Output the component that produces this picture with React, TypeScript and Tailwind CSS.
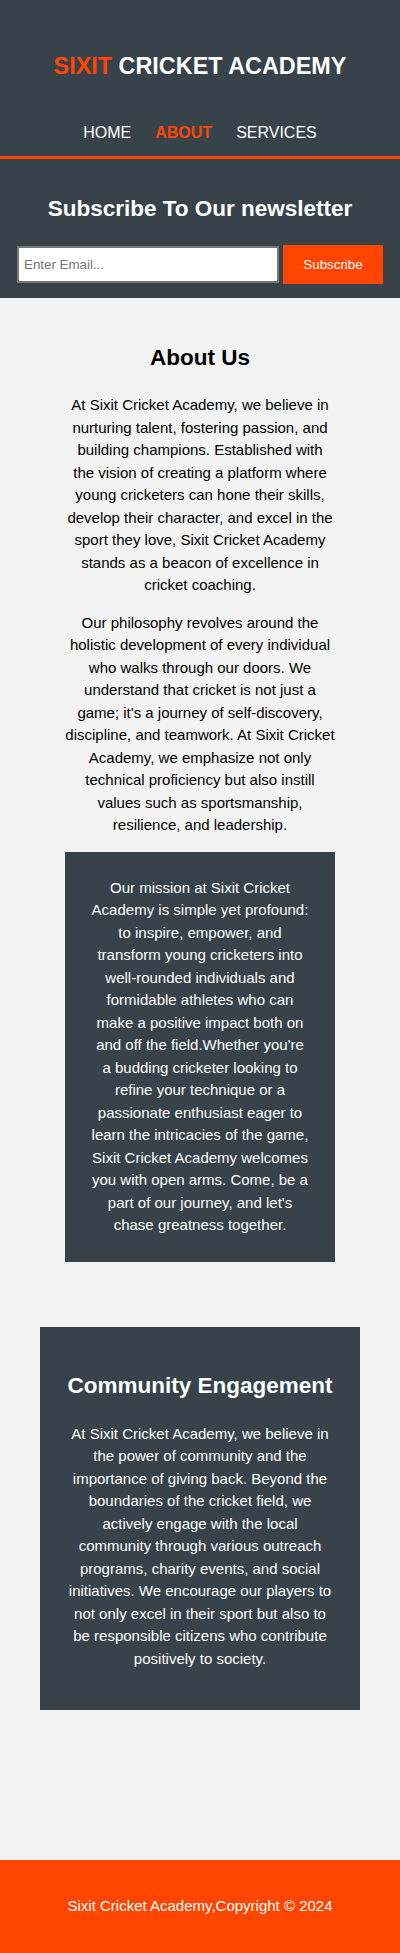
import React from "react";

export default function App() {
  return (
    <div className="min-h-[1953px] bg-[#f3f3f3] flex flex-col" style={{ fontFamily: '"Liberation Sans", Arial, sans-serif' }}>
      <header className="bg-[#37424a]">
        <div className="pt-[52px] text-center">
          <h1 className="text-[23.4px] leading-[28px] font-bold text-white">
            <span className="text-[#ff4500]">SIXIT</span> CRICKET ACADEMY
          </h1>
        </div>
        <nav className="mt-[43px] pb-[13px] flex justify-center gap-6 text-[16px] leading-[20px] text-white border-b-[3px] border-[#ff4500]">
          <a className="cursor-pointer">HOME</a>
          <a className="cursor-pointer font-bold text-[#ff4500]">ABOUT</a>
          <a className="cursor-pointer">SERVICES</a>
        </nav>
        <div className="pt-[36px] pb-[14px]">
          <h2 className="text-center text-[22.5px] leading-[28px] font-bold text-white">Subscribe To Our newsletter</h2>
          <form className="mt-[22px] px-[17px] flex items-center gap-[4px]" onSubmit={(e) => e.preventDefault()}>
            <input
              type="email"
              placeholder="Enter Email..."
              className="flex-1 min-w-0 h-[37px] bg-white border-2 border-[#767676] px-[5px] text-[13.33px] placeholder:text-[#757575] outline-none"
            />
            <button type="submit" className="w-[100px] h-[39px] bg-[#ff4500] text-white text-[13.33px]">
              Subscribe
            </button>
          </form>
        </div>
      </header>

      <main className="flex-1">
        <section className="w-[270px] mx-auto pt-[46px] text-center text-black">
          <h2 className="text-[22.5px] leading-[28px] font-bold">About Us</h2>
          <p className="mt-[22px] text-[15px] leading-[22.5px]">
            At Sixit Cricket Academy, we believe in nurturing talent, fostering passion, and building champions. Established with the vision of creating a platform where young cricketers can hone their skills, develop their character, and excel in the sport they love, Sixit Cricket Academy stands as a beacon of excellence in cricket coaching.
          </p>
          <p className="mt-[15px] text-[15px] leading-[22.5px]">
            Our philosophy revolves around the holistic development of every individual who walks through our doors. We understand that cricket is not just a game; it's a journey of self-discovery, discipline, and teamwork. At Sixit Cricket Academy, we emphasize not only technical proficiency but also instill values such as sportsmanship, resilience, and leadership.
          </p>
          <div className="mt-[15px] bg-[#37424a] p-[25px] text-white text-[15px] leading-[22.5px]">
            <p>
              Our mission at Sixit Cricket Academy is simple yet profound: to inspire, empower, and transform young cricketers into well-rounded individuals and formidable athletes who can make a positive impact both on and off the field.Whether you're a budding cricketer looking to refine your technique or a passionate enthusiast eager to learn the intricacies of the game, Sixit Cricket Academy welcomes you with open arms. Come, be a part of our journey, and let's chase greatness together.
            </p>
          </div>
        </section>

        <section className="mt-[65px] mx-[40px] bg-[#37424a] px-[25px] pt-[45px] pb-[40px] text-center text-white">
          <h2 className="text-[22.5px] leading-[28px] font-bold">Community Engagement</h2>
          <p className="mt-[23px] text-[15px] leading-[22.5px]">
            At Sixit Cricket Academy, we believe in the power of community and the importance of giving back. Beyond the boundaries of the cricket field, we actively engage with the local community through various outreach programs, charity events, and social initiatives. We encourage our players to not only excel in their sport but also to be responsible citizens who contribute positively to society.
          </p>
        </section>
      </main>

      <footer className="mt-[150px] h-[93px] bg-[#ff4500] flex items-center justify-center text-white text-[15px]">
        <p>Sixit Cricket Academy,Copyright © 2024</p>
      </footer>
    </div>
  );
}
